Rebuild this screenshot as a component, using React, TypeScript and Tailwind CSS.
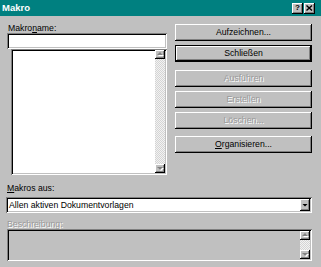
import React from "react";

const raised =
  "shadow-[inset_-1px_-1px_#000,inset_1px_1px_#fff,inset_-2px_-2px_#808080]";
const sunken =
  "shadow-[inset_1px_1px_#808080,inset_-1px_-1px_#fff,inset_2px_2px_#000,inset_-2px_-2px_#c0c0c0]";

function Btn({
  children,
  disabled,
  def,
}: {
  children: React.ReactNode;
  disabled?: boolean;
  def?: boolean;
}) {
  return (
    <div
      className={`h-[17px] w-full flex items-center justify-center leading-none ${
        def
          ? "shadow-[inset_0_0_0_1px_#000,inset_-2px_-2px_#000,inset_2px_2px_#fff,inset_-3px_-3px_#808080]"
          : raised
      } ${disabled ? "text-[#9a9a9a] [text-shadow:1px_1px_0_#fff]" : "text-black"}`}
    >
      {children}
    </div>
  );
}

function Arrow({ dir, disabled }: { dir: "up" | "down"; disabled?: boolean }) {
  const pts = dir === "up" ? "2,5 5,2 8,5" : "2,3 5,6 8,3";
  return (
    <div className={`w-[10px] h-[9px] bg-[#c0c0c0] ${raised} flex items-center justify-center`}>
      <svg width="10" height="9" viewBox="0 0 10 9">
        {disabled ? (
          <>
            <polygon points={pts} fill="#fff" transform="translate(1,1)" />
            <polygon points={pts} fill="#808080" />
          </>
        ) : (
          <polygon points={pts} fill="#000" />
        )}
      </svg>
    </div>
  );
}

const dither =
  "bg-[repeating-conic-gradient(#d4d4d4_0%_25%,#f2f2f2_0%_50%)] bg-[length:2px_2px]";

export default function App() {
  return (
    <div className="w-[321px] h-[267px] bg-[#c0c0c0] flex flex-col overflow-hidden font-['Liberation_Sans',Arial,sans-serif] text-[8.7px] text-black">
      {/* Title bar */}
      <div className="h-[16px] bg-[#008080] flex items-center pl-[2px] pr-[6px]">
        <span className="text-white font-bold text-[9.5px] leading-none">Makro</span>
        <div className="ml-auto flex gap-[1px]">
          <div className={`w-[11px] h-[11px] bg-[#c0c0c0] ${raised} flex items-center justify-center font-bold text-[8px] leading-none`}>
            ?
          </div>
          <div className={`w-[11px] h-[11px] bg-[#c0c0c0] ${raised} flex items-center justify-center`}>
            <svg width="7" height="6" viewBox="0 0 7 6">
              <path d="M0.5 0.5 L6 5.5 M6 0.5 L0.5 5.5" stroke="#000" strokeWidth="1.4" />
            </svg>
          </div>
        </div>
      </div>

      {/* Upper section */}
      <div className="flex items-start">
        <div className="ml-[7px] w-[160px] flex flex-col">
          <div className="mt-[7px] h-[10px] leading-[10px] pl-[1px]">
            Makro<span className="underline">n</span>ame:
          </div>
          <div className={`h-[16px] bg-white ${sunken}`} />
          <div className={`ml-[4px] h-[126px] bg-white ${sunken} flex justify-end p-[2px] pt-[1px]`}>
            <div className={`w-[10px] h-full flex flex-col ${dither}`}>
              <Arrow dir="up" disabled />
              <div className="flex-1" />
              <Arrow dir="down" disabled />
            </div>
          </div>
        </div>

        <div className="ml-[8px] w-[137px] mt-[8px] flex flex-col">
          <Btn>Aufzeichnen...</Btn>
          <div className="mt-[4px]">
            <Btn def>Schließen</Btn>
          </div>
          <div className="mt-[8px]">
            <Btn disabled>Ausführen</Btn>
          </div>
          <div className="mt-[4px]">
            <Btn disabled>Erstellen</Btn>
          </div>
          <div className="mt-[4px]">
            <Btn disabled>Löschen...</Btn>
          </div>
          <div className="mt-[7px]">
            <Btn>
              <span>
                <span className="underline">O</span>rganisieren...
              </span>
            </Btn>
          </div>
        </div>
      </div>

      {/* Makros aus */}
      <div className="mt-[8px] ml-[7px] h-[10px] leading-[10px]">
        <span className="underline">M</span>akros aus:
      </div>
      <div className={`mt-[4px] ml-[6px] w-[306px] h-[16px] bg-white ${sunken} flex items-center pl-[3px] pr-[2px]`}>
        <span className="leading-none">Allen aktiven Dokumentvorlagen</span>
        <div className={`ml-auto w-[10px] h-[12px] bg-[#c0c0c0] ${raised} flex items-center justify-center`}>
          <svg width="10" height="12" viewBox="0 0 10 12">
            <polygon points="2.5,5 7.5,5 5,7.5" fill="#000" />
          </svg>
        </div>
      </div>

      {/* Beschreibung */}
      <div className="mt-[6px] ml-[7px] h-[10px] leading-[10px] text-[#9a9a9a] [text-shadow:1px_1px_0_#fff]">
        Beschreibung:
      </div>
      <div className={`ml-[7px] w-[305px] h-[32px] bg-[#c0c0c0] ${sunken} flex justify-end p-[2px]`}>
        <div className={`w-[10px] h-full flex flex-col ${dither}`}>
          <Arrow dir="up" disabled />
          <div className="flex-1" />
          <Arrow dir="down" disabled />
        </div>
      </div>
    </div>
  );
}
